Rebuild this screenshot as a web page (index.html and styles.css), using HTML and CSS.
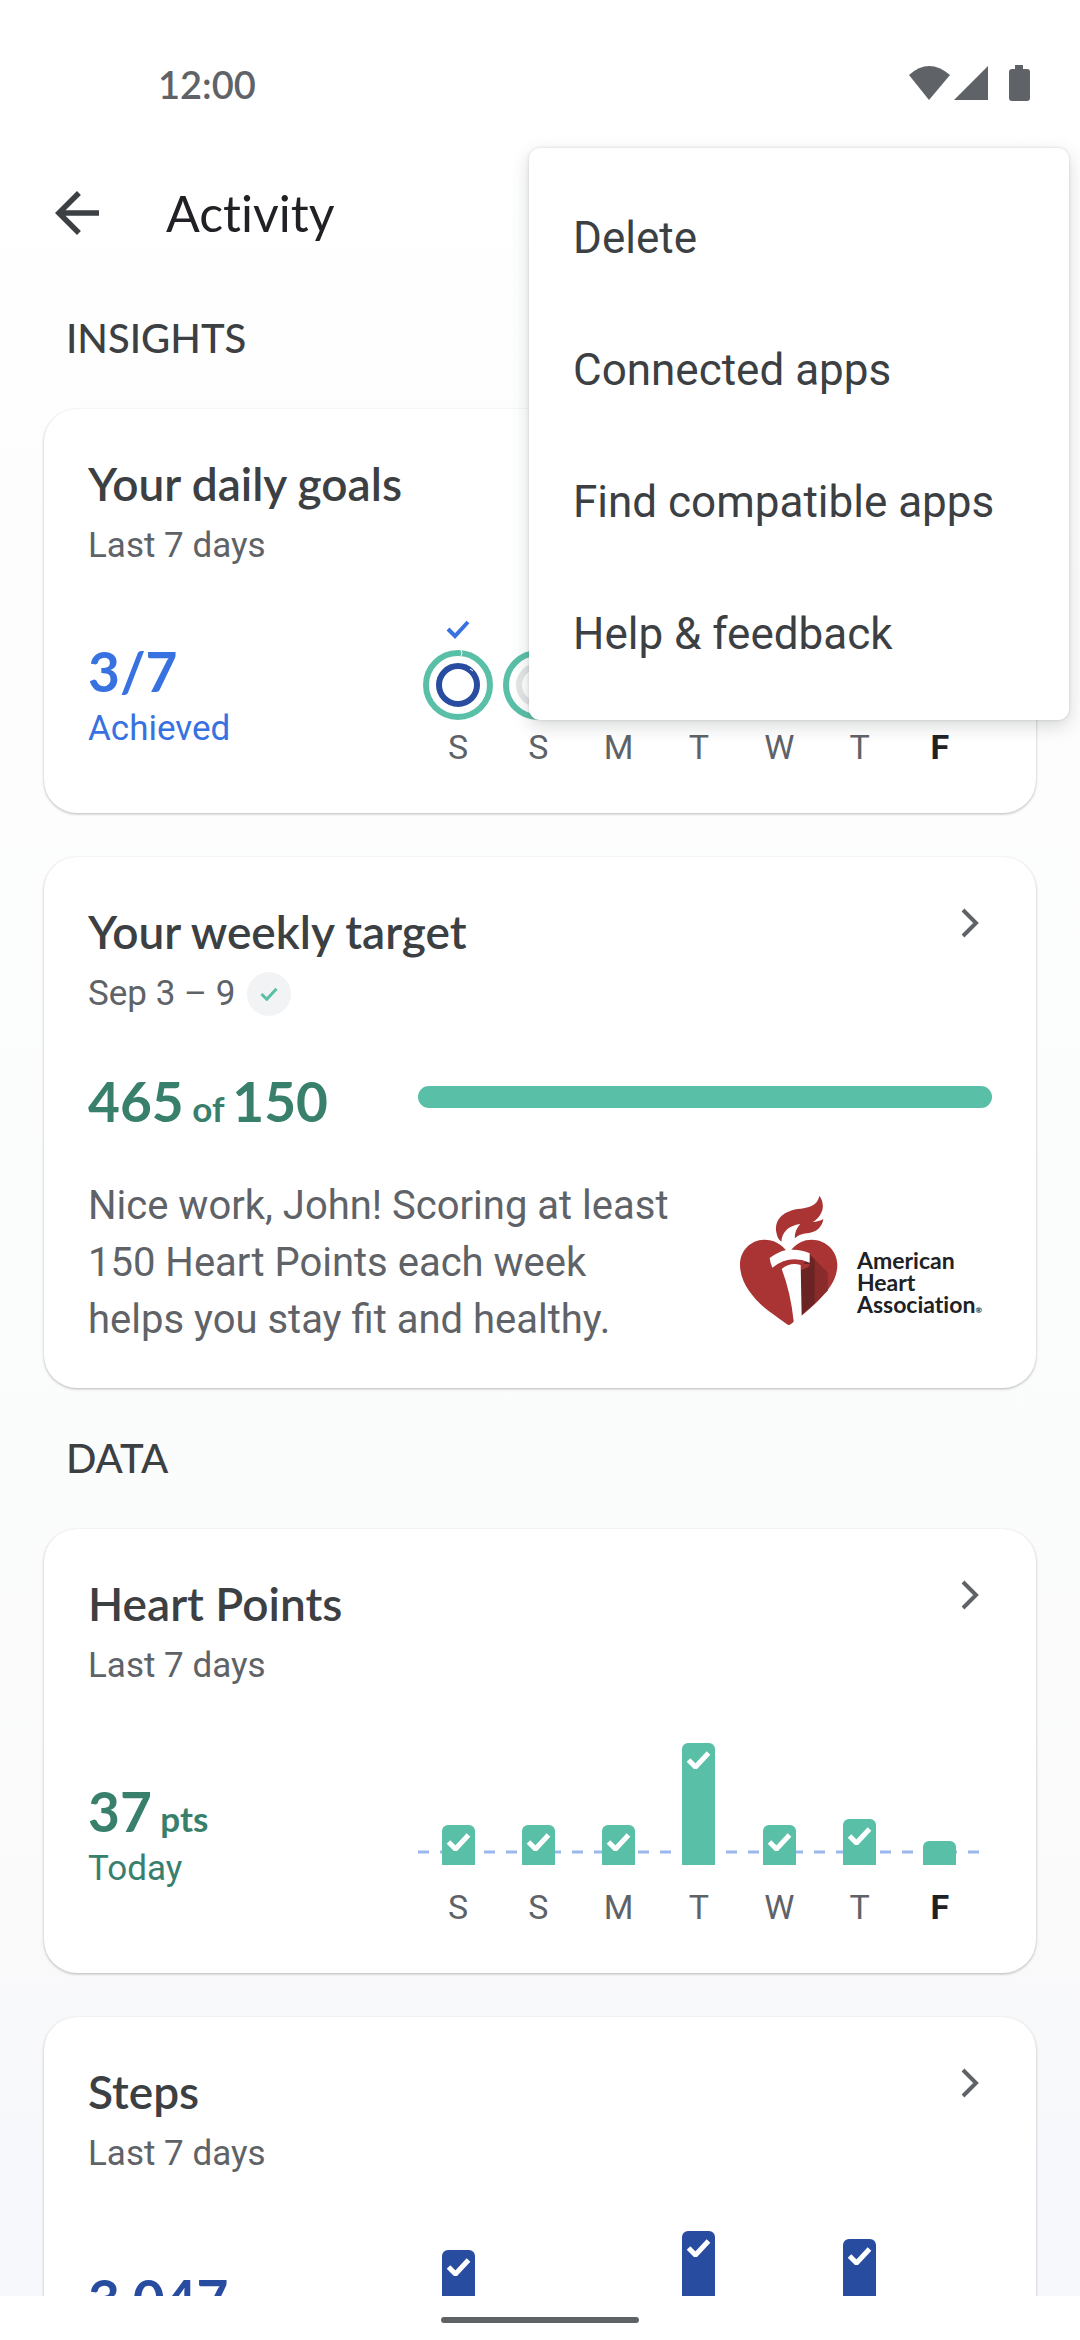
FILE: index.html
```html
<!DOCTYPE html>
<html lang="en">
<head>
    <meta charset="UTF-8">
    <meta name="viewport" content="width=device-width, initial-scale=1.0">
    <title>Activity</title>
    <link rel="stylesheet" href="styles.css">
</head>
<body>
    <svg class="defs" aria-hidden="true">
        <symbol id="check" viewBox="0 0 24 18">
            <path d="M2 9l7 7L22 2" fill="none" stroke="currentColor"/>
        </symbol>
        <symbol id="chevron" viewBox="0 0 44 44">
            <path d="M15 9l13 13-13 13" fill="none" stroke="currentColor" stroke-width="4"/>
        </symbol>
    </svg>

    <div class="status-bar">
        <span class="time">12:00</span>
        <div class="status-icons">
            <svg width="120" height="36" viewBox="0 0 120 36">
                <path d="M0 10Q20 -8 41 10L20 35z"/>
                <path d="M79 1v34H45z"/>
                <path d="M106 0h8v4h4q3 0 3 3v26q0 3-3 3h-15q-3 0-3-3V7q0-3 3-3h3z"/>
            </svg>
        </div>
    </div>

    <header class="app-bar">
        <button class="back" type="button" aria-label="Back">
            <svg width="66" height="66" viewBox="0 0 24 24"><path d="M20 11H7.83l5.59-5.59L12 4l-8 8 8 8 1.41-1.41L7.83 13H20v-2z"/></svg>
        </button>
        <h1>Activity</h1>
    </header>

    <nav class="menu" aria-label="More options">
        <button type="button">Delete</button>
        <button type="button">Connected apps</button>
        <button type="button">Find compatible apps</button>
        <button type="button">Help &amp; feedback</button>
    </nav>

    <main>
        <h2 class="section-title">INSIGHTS</h2>

        <section class="card">
            <div class="card-head">
                <h3>Your daily goals</h3>
                <a href="#goals" aria-label="Your daily goals"><svg class="chevron"><use href="#chevron"/></svg></a>
            </div>
            <p class="sub">Last 7 days</p>
            <div class="card-body goals">
                <div class="summary blue">
                    <p class="value">3/7</p>
                    <p class="caption">Achieved</p>
                </div>
                <div class="week">
                    <div class="day">
                        <svg class="met"><use href="#check"/></svg>
                        <svg class="ring" viewBox="0 0 80 80">
                            <circle class="points" cx="40" cy="40" r="32"/>
                            <circle class="steps" cx="40" cy="40" r="19"/>
                            <path class="notch" d="M43 5q2 3 0 6M52 24l3 2"/>
                        </svg>
                        <span>S</span>
                    </div>
                    <div class="day">
                        <svg class="ring" viewBox="0 0 80 80"><circle class="points" cx="40" cy="40" r="32"/><circle class="empty" cx="40" cy="40" r="19"/></svg>
                        <span>S</span>
                    </div>
                    <div class="day">
                        <svg class="ring" viewBox="0 0 80 80"><circle class="points" cx="40" cy="40" r="32"/><circle class="empty" cx="40" cy="40" r="19"/></svg>
                        <span>M</span>
                    </div>
                    <div class="day">
                        <svg class="met"><use href="#check"/></svg>
                        <svg class="ring" viewBox="0 0 80 80"><circle class="points" cx="40" cy="40" r="32"/><circle class="steps" cx="40" cy="40" r="19"/></svg>
                        <span>T</span>
                    </div>
                    <div class="day">
                        <svg class="ring" viewBox="0 0 80 80"><circle class="points" cx="40" cy="40" r="32"/><circle class="empty" cx="40" cy="40" r="19"/></svg>
                        <span>W</span>
                    </div>
                    <div class="day">
                        <svg class="met"><use href="#check"/></svg>
                        <svg class="ring" viewBox="0 0 80 80"><circle class="points" cx="40" cy="40" r="32"/><circle class="steps" cx="40" cy="40" r="19"/></svg>
                        <span>T</span>
                    </div>
                    <div class="day today">
                        <svg class="ring" viewBox="0 0 80 80"><circle class="empty" cx="40" cy="40" r="32"/><circle class="empty" cx="40" cy="40" r="19"/></svg>
                        <span>F</span>
                    </div>
                </div>
            </div>
        </section>

        <section class="card target">
            <div class="card-head">
                <h3>Your weekly target</h3>
                <a href="#target" aria-label="Your weekly target"><svg class="chevron"><use href="#chevron"/></svg></a>
            </div>
            <p class="sub">Sep 3 – 9 <span class="badge"><svg><use href="#check"/></svg></span></p>
            <div class="card-body">
                <p class="value green">465<small> of </small>150</p>
                <div class="progress" role="img" aria-label="465 of 150"></div>
            </div>
            <div class="note">
                <p class="note-text">Nice work, John! Scoring at least 150 Heart Points each week helps you stay fit and healthy.</p>
                <div class="aha">
                    <svg width="100" height="132" viewBox="115 100 300 396">
                        <path fill="#aa3434" d="M264 277C240 247 217 237 192 237c-42 0-74 33-74 75 0 58 45 107 87 140 20 15 39 28 53 38q6 5 12 1c42-31 80-65 105-96 23-25 35-55 35-83 0-42-35-75-77-75-23 0-46 8-69 40z"/>
                        <path fill="#8a2b2b" d="M327 281l54 54v55l-40 40z"/>
                        <path fill="#6b2424" d="M327 281l15 16v131l-42 37V325z"/>
                        <path fill="#aa3434" d="M230 310h97q3 10-26 18h-60z"/>
                        <path fill="#fff" d="M256 268l9-8 8 7q30-1 54 11v28q-60-26-112 15-6-13-8-29 22-17 49-24z"/>
                        <path fill="#fff" d="M243 325q25-21 57-12l3 152-15 22-10 2 1-8q-10-90-36-156z"/>
                        <path fill="#aa3434" d="M356 106c-6 29-31 35-56 38-50 4-80 31-73 71 2 13 7 23 15 28 2-28 20-48 57-53-11 12-18 28-16 43 10-11 27-15 42-16 25-4 40-20 43-42-8 5-20 9-32 9 19-9 34-34 30-54-1-10-5-18-10-24z"/>
                    </svg>
                    <p class="aha-name">American<br>Heart<br>Association<span>®</span></p>
                </div>
            </div>
        </section>

        <h2 class="section-title">DATA</h2>

        <section class="card">
            <div class="card-head">
                <h3>Heart Points</h3>
                <a href="#heart" aria-label="Heart Points"><svg class="chevron"><use href="#chevron"/></svg></a>
            </div>
            <p class="sub">Last 7 days</p>
            <div class="card-body">
                <div class="summary green">
                    <p class="value">37<small> pts</small></p>
                    <p class="caption">Today</p>
                </div>
                <div class="chart">
                    <div class="plot">
                        <svg class="goal-line"><line x1="0" y1="2" x2="100%" y2="2"/></svg>
                        <div class="bar" style="height: 40px"><svg><use href="#check"/></svg></div>
                        <div class="bar" style="height: 40px"><svg><use href="#check"/></svg></div>
                        <div class="bar" style="height: 40px"><svg><use href="#check"/></svg></div>
                        <div class="bar" style="height: 122px"><svg><use href="#check"/></svg></div>
                        <div class="bar" style="height: 40px"><svg><use href="#check"/></svg></div>
                        <div class="bar" style="height: 46px"><svg><use href="#check"/></svg></div>
                        <div class="bar" style="height: 24px"></div>
                    </div>
                    <div class="labels"><span>S</span><span>S</span><span>M</span><span>T</span><span>W</span><span>T</span><span class="now">F</span></div>
                </div>
            </div>
        </section>

        <section class="card steps-card">
            <div class="card-head">
                <h3>Steps</h3>
                <a href="#steps" aria-label="Steps"><svg class="chevron"><use href="#chevron"/></svg></a>
            </div>
            <p class="sub">Last 7 days</p>
            <div class="card-body">
                <div class="summary navy">
                    <p class="value">3,047</p>
                    <p class="caption">Today</p>
                </div>
                <div class="chart">
                    <div class="plot">
                        <div class="bar" style="height: 103px"><svg><use href="#check"/></svg></div>
                        <div class="bar" style="height: 40px"></div>
                        <div class="bar" style="height: 36px"></div>
                        <div class="bar" style="height: 122px"><svg><use href="#check"/></svg></div>
                        <div class="bar" style="height: 44px"></div>
                        <div class="bar" style="height: 114px"><svg><use href="#check"/></svg></div>
                        <div class="bar" style="height: 34px"></div>
                    </div>
                    <div class="labels"><span>S</span><span>S</span><span>M</span><span>T</span><span>W</span><span>T</span><span class="now">F</span></div>
                </div>
            </div>
        </section>
    </main>

    <div class="gesture-bar"><div class="handle"></div></div>
</body>
</html>
```

FILE: styles.css
```css
* {
    box-sizing: border-box;
}
body {
    margin: 0;
    height: 100vh;
    display: flex;
    flex-direction: column;
    overflow: hidden;
    font-family: Roboto, sans-serif;
    color: #3c4043;
    background: linear-gradient(#fff 5%, #fdfdfd 25%, #fbfdfc 55%, #fafafa 80%, #f7f8fb 92%);
}
h1, h2, h3, p {
    margin: 0;
}
h1, h3, .time, .value, .section-title {
    font-family: Lato, sans-serif;
    font-variant-ligatures: none;
}
button {
    border: none;
    background: none;
    padding: 0;
    color: inherit;
    font-family: inherit;
    cursor: pointer;
}
svg {
    display: block;
    stroke-width: 4;
}
.defs {
    display: none;
}

/* top bars */
.status-bar {
    display: flex;
    justify-content: space-between;
    padding: 52px 51px 41px 158px;
    line-height: 64px;
    color: #5f6368;
}
.time {
    font-size: 38px;
    font-weight: 600;
}
.status-icons {
    padding-top: 13px;
}
.status-icons svg {
    fill: #5f6368;
    overflow: visible;
}
.app-bar {
    display: flex;
    align-items: center;
    gap: 56px;
    height: 111px;
    padding: 0 44px;
}
.back svg {
    fill: #3c4043;
}
h1 {
    font-size: 50px;
    font-weight: 400;
    color: #202124;
}

/* overflow menu */
.menu {
    position: absolute;
    top: 148px;
    right: 11px;
    z-index: 2;
    width: 50%;
    padding: 24px 0 20px;
    border-radius: 11px;
    background: #fff;
    box-shadow: 0 0 3px rgba(0,0,0,0.14), 0 6px 18px rgba(60,64,67,0.2);
}
.menu button {
    display: block;
    width: 100%;
    height: 132px;
    padding: 0 44px;
    font-size: 44px;
    text-align: left;
}

/* content */
main {
    flex: 1;
    min-height: 0;
    overflow: hidden;
    padding: 0 44px;
}
.section-title {
    padding-left: 22px;
    font-size: 40px;
    font-weight: 500;
    line-height: 141px;
}
.card {
    padding: 44px;
    border-radius: 33px;
    background: #fff;
    box-shadow: 0 1px 3px rgba(0,0,0,0.28);
}
.card + .card {
    margin-top: 44px;
}
.card-head {
    display: flex;
    justify-content: space-between;
}
h3 {
    font-size: 46px;
    font-weight: 600;
    line-height: 62px;
}
.chevron {
    width: 44px;
    height: 44px;
    color: #5f6368;
}
.sub {
    display: flex;
    align-items: center;
    gap: 12px;
    font-size: 35px;
    line-height: 62px;
    color: #5f6368;
}
.badge {
    display: grid;
    place-items: center;
    width: 44px;
    height: 44px;
    border-radius: 50%;
    background: #f1f3f4;
    color: #5abfa7;
}
.badge svg {
    width: 18px;
    height: 14px;
}
.card-body {
    display: grid;
    grid-template-columns: 330px 1fr;
    align-items: end;
    margin-top: 36px;
}
.value {
    font-size: 55px;
    font-weight: 700;
    line-height: 64px;
}
.value small {
    font-size: 35px;
    line-height: 1;
}
.caption {
    font-size: 35px;
    line-height: 52px;
}
.summary {
    padding-bottom: 34px;
}
.goals .summary {
    padding-bottom: 14px;
}
.blue {
    color: #3871e0;
}
.green {
    color: #38806c;
}
.navy {
    color: #284da0;
}

/* daily goals */
.week {
    display: grid;
    grid-template-columns: repeat(7, 1fr);
    align-items: end;
    padding-right: 12px;
}
.day {
    display: flex;
    flex-direction: column;
    align-items: center;
}
.day span, .labels span {
    font-size: 34px;
    line-height: 44px;
    text-align: center;
    color: #5f6368;
}
.day.today span, .labels .now {
    font-weight: 700;
    color: #202124;
}
.met {
    width: 24px;
    height: 32px;
    color: #3871e0;
}
.ring {
    width: 80px;
    height: 80px;
    fill: none;
    stroke-width: 6;
}
.points {
    stroke: #5abfa7;
}
.steps {
    stroke: #284da0;
}
.empty {
    stroke: #e3e5e6;
}
.notch {
    stroke: #fff;
    stroke-width: 1;
}

/* weekly target */
.target {
    padding-bottom: 40px;
}
.target .card-body {
    align-items: center;
    height: 68px;
}
.target .value {
    padding-top: 8px;
}
.progress {
    height: 22px;
    border-radius: 11px;
    background: #5abfa7;
}
.note {
    display: flex;
    align-items: center;
    justify-content: space-between;
    margin-top: 48px;
    font-size: 40px;
    line-height: 57px;
    color: #5f6368;
}
.note-text {
    max-width: 15em;
}
.aha {
    display: flex;
    flex: none;
    align-items: flex-end;
    gap: 18px;
    padding: 0 10px 6px 0;
}
.aha svg {
    stroke-width: 0;
}
.aha-name {
    padding-bottom: 11px;
    font-family: Lato, sans-serif;
    font-variant-ligatures: none;
    font-size: 23px;
    font-weight: 700;
    line-height: 22px;
    color: #202124;
}
.aha-name span {
    font-size: 8px;
    line-height: 1;
}

/* bar charts */
.chart {
    padding-right: 12px;
}
.plot {
    position: relative;
    display: grid;
    grid-template-columns: repeat(7, 1fr);
    align-items: end;
    justify-items: center;
    height: 132px;
}
.goal-line {
    position: absolute;
    bottom: 11px;
    left: 0;
    width: 100%;
    height: 4px;
    stroke: #9bb8ec;
    stroke-width: 3;
    stroke-dasharray: 11 11;
}
.bar {
    position: relative;
    width: 33px;
    padding: 8px 4px 0;
    border-radius: 6px 6px 0 0;
    background: #5abfa7;
    color: #fff;
}
.bar svg {
    width: 25px;
    height: 18px;
    stroke-width: 5;
}
.steps-card .bar {
    background: #284da0;
}
.labels {
    display: grid;
    grid-template-columns: repeat(7, 1fr);
    margin-top: 20px;
}

/* gesture navigation */
.gesture-bar {
    display: grid;
    place-items: center;
    height: 44px;
    padding-top: 4px;
    background: #fff;
}
.handle {
    width: 198px;
    height: 6px;
    border-radius: 3px;
    background: #5f6368;
}
```
